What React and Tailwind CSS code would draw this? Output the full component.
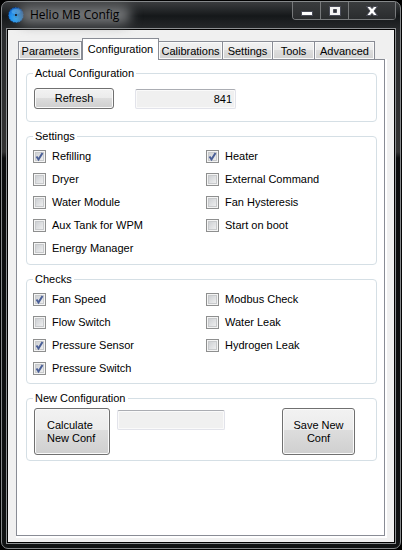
import { useState } from "react";

const TABS = [
  { name: "Parameters", width: "w-[64px]" },
  { name: "Configuration", width: "w-[77px]" },
  { name: "Calibrations", width: "w-[64px]" },
  { name: "Settings", width: "w-[50px]" },
  { name: "Tools", width: "w-[42px]" },
  { name: "Advanced", width: "w-[60px]" },
];

const SETTINGS = [
  ["Refilling", true],
  ["Heater", true],
  ["Dryer", false],
  ["External Command", false],
  ["Water Module", false],
  ["Fan Hysteresis", false],
  ["Aux Tank for WPM", false],
  ["Start on boot", false],
  ["Energy Manager", false],
];

const CHECKS = [
  ["Fan Speed", true],
  ["Modbus Check", false],
  ["Flow Switch", false],
  ["Water Leak", false],
  ["Pressure Sensor", true],
  ["Hydrogen Leak", false],
  ["Pressure Switch", true],
];

function AppIcon() {
  return (
    <svg viewBox="0 0 16 16" className="h-4 w-4 shrink-0" aria-hidden="true">
      <defs>
        <radialGradient id="ball" cx="50%" cy="70%" r="65%">
          <stop offset="0" stopColor="#35b4ff" />
          <stop offset="0.6" stopColor="#1c90f4" />
          <stop offset="1" stopColor="#0f62c8" />
        </radialGradient>
      </defs>
      <circle cx="8" cy="8" r="7.7" fill="url(#ball)" />
      <circle cx="8" cy="8" r="7.6" fill="none" stroke="#06204a" strokeWidth="0.8" strokeDasharray="1.5 1.5" />
      <ellipse cx="8" cy="4.5" rx="4.5" ry="2.5" fill="#58b8fa" opacity="0.6" />
      <path d="M8 5v6M5 8h6" stroke="#0b62c0" strokeWidth="1" opacity="0.4" />
      <rect x="7" y="7" width="2" height="2" fill="#04101f" />
    </svg>
  );
}

function TitleBar() {
  const button =
    "flex h-[17px] items-center justify-center border-r border-[#77797b] bg-gradient-to-b from-[#3a3c3e] to-[#2a2c2e]";
  return (
    <header className="flex h-[26px] items-start justify-between pl-[6px] pr-1">
      <div className="flex h-[26px] items-center gap-[6px]">
        <AppIcon />
        <h1 className="relative font-['Open_Sans','Noto_Sans',sans-serif] text-[12px] leading-4 text-black">
          <span className="absolute -inset-x-3 -inset-y-px rounded-full bg-[#77797b] blur-[6px]" />
          <span className="relative">Helio MB Config</span>
        </h1>
      </div>
      <div className="flex overflow-hidden rounded-b-[4px] border-b border-l border-[#77797b]">
        <button type="button" aria-label="Minimize" className={button + " w-[28px]"}>
          <svg viewBox="0 0 12 12" className="h-3 w-3">
            <rect x="0.5" y="6.5" width="11" height="4" fill="#fff" stroke="#4a4c58" />
          </svg>
        </button>
        <button type="button" aria-label="Maximize" className={button + " w-[28px]"}>
          <svg viewBox="0 0 12 12" className="h-3 w-3">
            <path fillRule="evenodd" d="M.5 1.5h11v9H.5zM4.5 4.5h3v3h-3z" fill="#f4f4f4" stroke="#4a4c58" />
          </svg>
        </button>
        <button type="button" aria-label="Close" className={button + " w-[47px]"}>
          <svg viewBox="0 0 12 12" className="h-3 w-3">
            <path
              d="M.5 1.5h3.7L6 3.6l1.8-2.1h3.7L8 6l3.5 4.5H7.8L6 8.4l-1.8 2.1H.5L4 6z"
              fill="#fff"
              stroke="#4a4c58"
            />
          </svg>
        </button>
      </div>
    </header>
  );
}

function Group({ title, body, children }) {
  return (
    <fieldset className="min-w-0 rounded-[4px] border border-[#d5dfe5] pl-[6px]">
      <legend className="px-[2px] leading-[15px]">{title}</legend>
      <div className={body}>{children}</div>
    </fieldset>
  );
}

function Check({ label, checked }) {
  return (
    <label className="flex h-[23px] items-center gap-[6px]">
      <span className="grid h-[13px] w-[13px] shrink-0">
        <input
          type="checkbox"
          defaultChecked={checked}
          className="peer col-start-1 row-start-1 h-[13px] w-[13px] appearance-none border border-[#8e8f8f] bg-gradient-to-br from-[#c6c9cd] to-[#f6f6f6] shadow-[inset_0_0_0_1px_#f4f4f4,inset_0_0_0_2px_#c8cacc]"
        />
        <svg
          viewBox="0 0 13 13"
          className="pointer-events-none invisible col-start-1 row-start-1 h-[13px] w-[13px] peer-checked:visible"
          aria-hidden="true"
        >
          <path d="M3.5 6.5l2 3 4-6.5" fill="none" stroke="#4a5f97" strokeWidth="2" />
        </svg>
      </span>
      <span className="leading-[15px]">{label}</span>
    </label>
  );
}

function CheckGrid({ items }) {
  return items.map(([label, checked]) => <Check key={label} label={label} checked={checked} />);
}

function PushButton({ size, children }) {
  return (
    <button
      type="button"
      className={
        "rounded-[3px] border border-[#707070] bg-[linear-gradient(#f2f2f2,#ebebeb_47%,#dddddd_47%,#cfcfcf)] text-center leading-[13px] shadow-[inset_0_0_0_1px_#fafafa] " +
        size
      }
    >
      {children}
    </button>
  );
}

const FIELD =
  "h-5 rounded-[2px] border border-[#e2e3ea] border-t-[#abadb3] bg-[#f0f0f0] px-[3px] text-right shadow-[inset_0_0_0_1px_#fafafa]";

export default function App() {
  const [active, setActive] = useState("Configuration");

  return (
    <div className="flex min-h-screen flex-col bg-black p-px font-['Liberation_Sans',Arial,sans-serif] text-[11px] text-black">
      <div className="flex flex-1 flex-col rounded-[7px] border border-[#85888a] bg-[linear-gradient(#3a3c3e,#15181a_14px,#2a2c2e_30px,#333_150px,#0c0d0e_156px,#101213)]">
        <TitleBar />
        <div className="mx-1 mb-1 flex flex-1 flex-col border border-[#8d9092] bg-black p-px">
          <main className="flex flex-1 flex-col bg-[#f0f0f0] pb-1 pl-2 pr-[7px] pt-2">
            <div role="tablist" className="z-10 -mb-px flex items-end pl-[2px]">
              {TABS.map((tab) => (
                <button
                  key={tab.name}
                  type="button"
                  role="tab"
                  aria-selected={tab.name === active}
                  onClick={() => setActive(tab.name)}
                  className={
                    "shrink-0 whitespace-nowrap border-[#898c95] text-center leading-[15px] " +
                    tab.width +
                    (tab.name === active
                      ? " h-[22px] border-x border-t bg-white"
                      : " h-[19px] border border-l-0 bg-[linear-gradient(#f2f2f2,#ebebeb_50%,#dddddd_50%,#d2d2d2)] pt-px shadow-[inset_0_0_0_1px_#fafafa] first:border-l")
                  }
                >
                  {tab.name}
                </button>
              ))}
            </div>
            <div className="flex flex-1 flex-col bg-white pb-[2px] pr-[2px]">
              <section
                role="tabpanel"
                aria-label={active}
                className="flex flex-1 flex-col gap-[7px] border border-[#898c95] bg-white px-[9px] pb-2 pr-[7px] pt-[6px]"
              >
                <Group title="Actual Configuration" body="flex items-center gap-[21px] pb-3 pl-px pt-[7px]">
                  <PushButton size="h-[21px] w-[80px]">Refresh</PushButton>
                  <input aria-label="Actual configuration value" readOnly defaultValue="841" className={FIELD + " w-[101px]"} />
                </Group>
                <Group title="Settings" body="grid grid-cols-[173px_1fr] pb-1 pt-px">
                  <CheckGrid items={SETTINGS} />
                </Group>
                <Group title="Checks" body="grid grid-cols-[173px_1fr] pb-[3px] pt-px">
                  <CheckGrid items={CHECKS} />
                </Group>
                <Group title="New Configuration" body="flex items-start pb-[5px] pl-px pr-[21px] pt-[2px]">
                  <PushButton size="h-[47px] w-[76px] px-3">
                    <span className="block text-left">Calculate New Conf</span>
                  </PushButton>
                  <input
                    aria-label="New configuration value"
                    readOnly
                    className={FIELD + " ml-[7px] mt-[2px] w-[108px]"}
                  />
                  <div className="ml-auto">
                    <PushButton size="h-[47px] w-[73px] px-2">Save New Conf</PushButton>
                  </div>
                </Group>
              </section>
            </div>
          </main>
        </div>
      </div>
    </div>
  );
}
